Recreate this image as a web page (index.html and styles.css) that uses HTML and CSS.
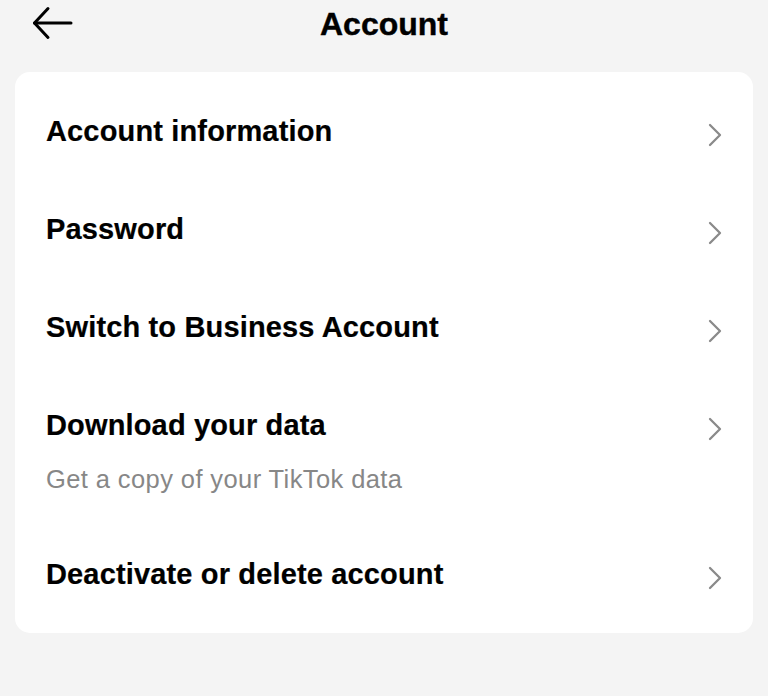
FILE: index.html
```html
<!DOCTYPE html>
<html lang="en">
<head>
<meta charset="utf-8">
<title>Account</title>
<link rel="stylesheet" href="styles.css">
</head>
<body>
<header class="topbar">
  <button class="back" aria-label="Back">
    <svg width="42" height="34" viewBox="0 0 42 34" fill="none" stroke="#000" stroke-width="3" stroke-linecap="round" stroke-linejoin="round">
      <polyline points="16,2.5 2.5,17 16,31.5"/>
      <line x1="2.5" y1="17" x2="39" y2="17"/>
    </svg>
  </button>
  <h1 class="title">Account</h1>
  <span class="spacer"></span>
</header>
<main class="card">
  <a class="row" href="#">
    <div class="texts"><span class="label">Account information</span></div>
    <svg class="chev" width="16" height="24" viewBox="0 0 16 24" fill="none" stroke="#8a8a8a" stroke-width="2.3" stroke-linecap="round" stroke-linejoin="round"><polyline points="3,2 13,12 3,22"/></svg>
  </a>
  <a class="row" href="#">
    <div class="texts"><span class="label">Password</span></div>
    <svg class="chev" width="16" height="24" viewBox="0 0 16 24" fill="none" stroke="#8a8a8a" stroke-width="2.3" stroke-linecap="round" stroke-linejoin="round"><polyline points="3,2 13,12 3,22"/></svg>
  </a>
  <a class="row" href="#">
    <div class="texts"><span class="label">Switch to Business Account</span></div>
    <svg class="chev" width="16" height="24" viewBox="0 0 16 24" fill="none" stroke="#8a8a8a" stroke-width="2.3" stroke-linecap="round" stroke-linejoin="round"><polyline points="3,2 13,12 3,22"/></svg>
  </a>
  <a class="row" href="#">
    <div class="texts">
      <span class="label">Download your data</span>
      <span class="sub">Get a copy of your TikTok data</span>
    </div>
    <svg class="chev" width="16" height="24" viewBox="0 0 16 24" fill="none" stroke="#8a8a8a" stroke-width="2.3" stroke-linecap="round" stroke-linejoin="round"><polyline points="3,2 13,12 3,22"/></svg>
  </a>
  <a class="row" href="#">
    <div class="texts"><span class="label">Deactivate or delete account</span></div>
    <svg class="chev" width="16" height="24" viewBox="0 0 16 24" fill="none" stroke="#8a8a8a" stroke-width="2.3" stroke-linecap="round" stroke-linejoin="round"><polyline points="3,2 13,12 3,22"/></svg>
  </a>
</main>
</body>
</html>
```
FILE: styles.css
```css
* { box-sizing: border-box; }
html, body {
  margin: 0;
  padding: 0;
  background: #f4f4f4;
  font-family: "Liberation Sans", Arial, sans-serif;
  color: #000;
}
body {
  width: 768px;
  height: 696px;
  overflow: hidden;
}
.topbar {
  height: 48px;
  display: grid;
  grid-template-columns: 1fr auto 1fr;
  align-items: center;
  padding: 0 15px 0 32px;
}
.back {
  justify-self: start;
  border: 0;
  background: none;
  padding: 0;
  display: flex;
  margin-top: -2px;
}
.title {
  margin: 0;
  font-size: 32px;
  line-height: 36px;
  font-weight: 700;
  -webkit-text-stroke: 0.4px #000;
  margin-left: -17px;
}
.card {
  margin: 24px 15px 0;
  background: #fff;
  border-radius: 15px;
  padding: 10px 0;
  display: flex;
  flex-direction: column;
}
.row {
  display: flex;
  align-items: flex-start;
  justify-content: space-between;
  padding: 31px 30px 31px 31px;
  text-decoration: none;
  color: inherit;
}
.texts {
  display: flex;
  flex-direction: column;
  gap: 21px;
}
.label {
  font-size: 29px;
  line-height: 36px;
  font-weight: 700;
  letter-spacing: 0.15px;
  -webkit-text-stroke: 0.2px #000;
}
.sub {
  font-size: 25.5px;
  line-height: 30px;
  color: #878787;
  letter-spacing: 0.4px;
}
.chev {
  margin-top: 10px;
  flex: none;
}
```
